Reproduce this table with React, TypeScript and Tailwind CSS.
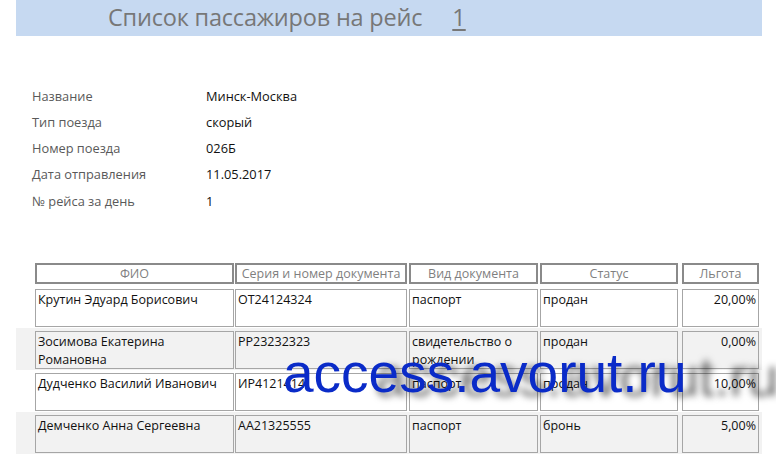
const INFO = [
  { label: 'Название', value: 'Минск-Москва' },
  { label: 'Тип поезда', value: 'скорый' },
  { label: 'Номер поезда', value: '026Б' },
  { label: 'Дата отправления', value: '11.05.2017' },
  { label: '№ рейса за день', value: '1' },
]

// column widths and left gaps, measured from the screenshot
const COLS = [
  { title: 'ФИО', w: 'w-[199px]', ml: 'ml-[19px]', right: false },
  { title: 'Серия и номер документа', w: 'w-[172px]', ml: 'ml-[1px]', right: false },
  { title: 'Вид документа', w: 'w-[129px]', ml: 'ml-[2px]', right: false },
  { title: 'Статус', w: 'w-[138px]', ml: 'ml-[2px]', right: false },
  { title: 'Льгота', w: 'w-[77px]', ml: 'ml-[4px]', right: true },
]

const ROWS = [
  ['Крутин Эдуард Борисович', 'ОТ24124324', 'паспорт', 'продан', '20,00%'],
  ['Зосимова Екатерина Романовна', 'РР23232323', 'свидетельство о рождении', 'продан', '0,00%'],
  ['Дудченко Василий Иванович', 'ИР4121414', 'паспорт', 'продан', '10,00%'],
  ['Демченко Анна Сергеевна', 'АА21325555', 'паспорт', 'бронь', '5,00%'],
]

export default function App() {
  return (
    <div className="relative w-[776px] h-[470px] overflow-hidden bg-white font-['Open_Sans',sans-serif]">
      {/* header band */}
      <div className="ml-[16px] w-[746px] h-[36px] bg-[#c6d9f1] flex items-center pl-[92px] text-[#777]">
        <span className="text-[23.5px] tracking-[-0.2px]">Список пассажиров на рейс</span>
        <span className="ml-[30px] text-[23.5px] underline underline-offset-[3px]">1</span>
      </div>

      {/* trip info */}
      <div className="pt-[47px] pl-[32px] text-[12.8px]">
        {INFO.map(r => (
          <div key={r.label} className="flex items-center h-[26.25px]">
            <div className="w-[174px] text-[#595959]">{r.label}</div>
            <div className="text-[#111]">{r.value}</div>
          </div>
        ))}
      </div>

      {/* passengers table */}
      <div className="mt-[49px] ml-[16px] text-[12.5px]">
        <div className="flex h-[23px]">
          {COLS.map(c => (
            <div key={c.title}
              className={`${c.w} ${c.ml} h-[21px] border-2 border-[#8a8a8a] flex items-center justify-center text-[#7f7f7f] leading-none whitespace-nowrap overflow-hidden`}>
              {c.title}
            </div>
          ))}
        </div>
        {ROWS.map((row, i) => (
          <div key={i} className={`w-[746px] h-[42px] pt-[3px] flex ${i % 2 === 1 ? 'bg-[#f2f2f2]' : 'bg-white'}`}>
            {row.map((v, j) => (
              <div key={j}
                className={`${COLS[j].w} ${COLS[j].ml} h-[38px] border border-[#a6a6a6] px-[2px] pt-[1px] leading-[18px] text-[#111] overflow-hidden ${COLS[j].right ? 'text-right' : ''}`}>
                {v}
              </div>
            ))}
          </div>
        ))}
      </div>

      {/* watermark */}
      <div className="absolute left-[283px] top-[346px] text-[55px] leading-none text-[#0a2bc8] font-['Liberation_Sans',Arial,sans-serif] [text-shadow:92px_4px_7px_rgba(0,0,0,0.6)] whitespace-nowrap">
        access.avorut.ru
      </div>
    </div>
  )
}
